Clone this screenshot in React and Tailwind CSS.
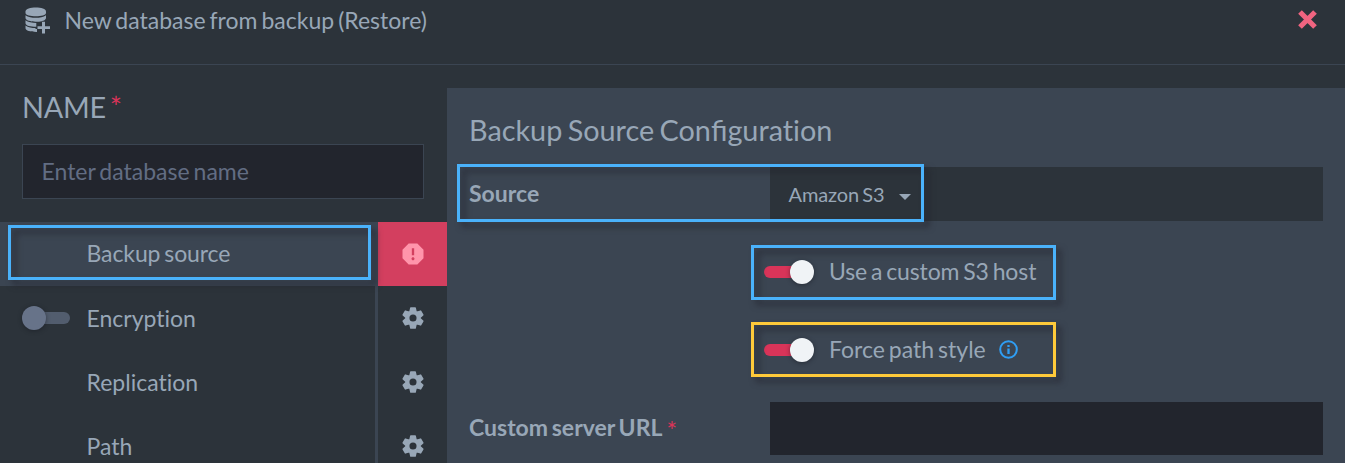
import { MdReport } from 'react-icons/md';

function DatabasePlusIcon() {
  return (
    <svg className="block h-[27px] w-[26px] fill-[#98a7b7]" viewBox="0 0 26 27">
      <path d="M0.5 4.5C0.5 2 5.5 0.6 10.8 0.6S21 2 21 4.5V6C21 8.300 16 9.300 10.800 9.300S0.500 8.300 0.500 6Z" />
      <path d="M0.500 8.200C3 10.200 7 10.700 10.800 10.700S18.600 10.200 21 8.200V11.200C20.500 12.900 18.800 13.600 17 14V14.200C15 14.700 13 14.700 10.800 14.700C5.500 14.700 0.500 13.500 0.500 11.100Z" />
      <path d="M0.500 13.300C3 15.300 7 15.900 11.300 15.900V19.700C5.500 19.700 0.500 18.600 0.500 16.200Z" />
      <path d="M0.500 18.400C3 20.300 7 20.900 10.500 20.900V21.900H12V24.900C6 25 0.500 23.800 0.500 21.300Z" />
      <path d="M17 14.800H20V19.200H25V22H20V26.500H17V22H12.500V19.200H17Z" />
    </svg>
  );
}

function CloseIcon() {
  return (
    <svg className="block size-[19px] stroke-[#f06480]" viewBox="0 0 19 19" strokeWidth="5.200" fill="none">
      <path d="M2 2L17 17M17 2L2 17" />
    </svg>
  );
}

function InfoIcon() {
  return (
    <svg className="block size-[19px]" viewBox="0 0 19 19" fill="none" stroke="#2f9ef4" strokeWidth="2">
      <circle cx="9.500" cy="9.500" r="8.300" />
      <path d="M9.500 8.600V14M9.500 5V7" strokeWidth="2.300" />
    </svg>
  );
}

const TOOTH_ANGLES = [0, 60, 120, 180, 240, 300];

function GearIcon() {
  return (
    <svg className="block size-[22px]" viewBox="-11 -11 22 22">
      <circle r="5.700" fill="none" stroke="currentColor" strokeWidth="4.300" />
      {TOOTH_ANGLES.map((angle) => (
        <path
          key={angle}
          d="M-3.700 -6.500L-2.900 -10.200Q-2.800 -10.800 -2.200 -10.800H2.200Q2.800 -10.800 2.900 -10.200L3.700 -6.500Z"
          transform={`rotate(${angle})`}
          fill="currentColor"
        />
      ))}
    </svg>
  );
}

function SwitchOn() {
  return (
    <span className="flex h-6 w-[50px] shrink-0 items-center">
      <span className="h-3 w-[34px] rounded-l-full bg-[#d93459]" />
      <span className="-ml-2 size-6 shrink-0 rounded-full bg-[#f0f3f6] shadow-[0_1px_4px_rgba(20,22,30,0.5)]" />
    </span>
  );
}

function SwitchOff() {
  return (
    <span className="flex h-6 w-12 shrink-0 items-center">
      <span className="z-10 size-6 shrink-0 rounded-full bg-[#677389] shadow-[0_1px_4px_rgba(20,22,30,0.5)]" />
      <span className="-ml-2 h-3 w-8 rounded-r-full bg-[#525d6e]" />
    </span>
  );
}

function StepRow({ label, toggle }) {
  return (
    <li className="flex h-[64.300px]">
      <div className="flex w-[378px] items-center border-r-[3px] border-[#3b4552] pl-[22px]">
        <span className="w-[64.500px]">{toggle && <SwitchOff />}</span>
        <span className="-mt-px">{label}</span>
      </div>
      <div className="flex flex-1 items-center justify-center pb-px">
        <GearIcon />
      </div>
    </li>
  );
}

function Highlight({ className }) {
  return (
    <div className={`pointer-events-none absolute border-[3px] drop-shadow-[5px_5px_3px_rgba(30,30,40,0.7)] ${className}`} />
  );
}

export default function App() {
  return (
    <div className="relative flex h-[463px] w-[1345px] flex-col overflow-hidden bg-[#2c333a] font-['Lato',sans-serif] text-[23px] leading-8 text-[#98a7b7] [word-spacing:-1.900px] [font-variant-ligatures:none]">
      <header className="flex h-[65px] shrink-0 items-start border-b border-[#3b4552] pl-[24.500px] pr-7">
        <span className="pt-[6.500px]"><DatabasePlusIcon /></span>
        <h1 className="ml-[14px] flex-1 pt-[4px]">New database from backup (Restore)</h1>
        <button className="pt-[10px]"><CloseIcon /></button>
      </header>

      <div className="flex min-h-0 flex-1">
        <aside className="w-[447px] shrink-0">
          <div className="px-[22px] pt-[22px]">
            <label className="flex h-10 text-[28.800px] leading-10 tracking-[-0.250px]">
              NAME <span className="ml-[4px] text-[29px] leading-[40px] text-[#d93459]">*</span>
            </label>
            <input
              className="mt-[17px] block h-[55px] w-[402px] border border-[#3b4552] bg-[#22252d] px-[18.500px] pb-[2px] [word-spacing:-1.900px] placeholder:text-[#626d83]"
              placeholder="Enter database name"
            />
          </div>
          <ul className="mt-[23px]">
            <li className="flex h-16 bg-[#3b4552]">
              <div className="flex w-[378px] items-center pb-[2px] pl-[86.500px] tracking-[-0.100px]">Backup source</div>
              <div className="flex flex-1 items-center justify-center bg-[#d33f5f] text-[#ff95ab]">
                <MdReport className="size-7" />
              </div>
            </li>
            <StepRow label="Encryption" toggle />
            <StepRow label="Replication" />
            <StepRow label="Path" />
          </ul>
        </aside>

        <main className="mt-[23px] flex-1 bg-[#3b4552] pl-[22px] pr-[22px]">
          <h2 className="pt-[22px] text-[28.800px] leading-10 [word-spacing:-2px]">
            Backup Source Con<span className="[font-variant-ligatures:common-ligatures]">fi</span>guration
          </h2>
          <div className="mt-[17px] flex h-[54px] items-center">
            <span className="w-[301px] pb-[2px] font-bold">Source</span>
            <div className="flex h-full flex-1 items-center bg-[#2c333a] pl-[18.500px] text-[20px]">
              <span className="tracking-[-0.100px]">Amazon S3</span>
              <span className="ml-[14px] mt-[5px] border-x-[6px] border-t-[6px] border-x-transparent border-t-[#98a7b7]" />
            </div>
          </div>
          <div className="mt-[35px] flex h-8 items-center pl-[295px]">
            <SwitchOn />
            <span className="ml-[15px] pb-[2px] tracking-[-0.120px]">Use a custom S3 host</span>
          </div>
          <div className="mt-[46px] flex h-8 items-center pl-[295px]">
            <SwitchOn />
            <span className="ml-[15px] pb-[2px]">Force path style</span>
            <span className="-mt-[2px] ml-[13px]"><InfoIcon /></span>
          </div>
          <div className="mt-[36px] flex h-[53px] items-center">
            <span className="flex w-[301px] pb-[3px] font-bold">
              Custom server URL<span className="ml-[4px] pt-[3px] text-[25px] leading-[32px] -mb-[3px] font-normal text-[#d93459]">*</span>
            </span>
            <input className="block h-full min-w-0 flex-1 bg-[#22252d] px-4" />
          </div>
        </main>
      </div>

      <Highlight className="left-[8px] top-[225px] h-[55px] w-[363px] border-[#4ab2fb]" />
      <Highlight className="left-[457px] top-[164px] h-[58px] w-[467px] border-[#4ab2fb]" />
      <Highlight className="left-[751px] top-[245px] h-[55px] w-[305px] border-[#4ab2fb]" />
      <Highlight className="left-[751px] top-[322px] h-[55px] w-[305px] border-[#ffca3a]" />
    </div>
  );
}
